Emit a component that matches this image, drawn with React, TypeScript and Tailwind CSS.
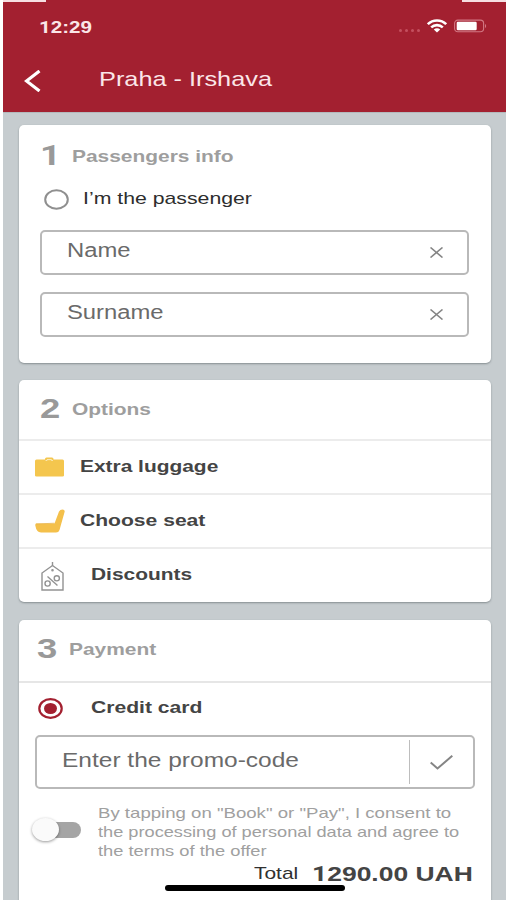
import type { ReactNode } from 'react';

type TextProps = {
  children: ReactNode;
  className?: string;
};

// Wide Helvetica-like label, stretched horizontally from its left edge
function Wide({ children, className = '' }: TextProps) {
  return (
    <span className={`block w-max origin-left whitespace-nowrap ${className}`}>
      {children}
    </span>
  );
}

// Digit one without a foot serif
function One() {
  return <span className="font-[Roboto,sans-serif]">1</span>;
}

function StatusBar() {
  return (
    <div className="flex h-[52px] items-center pl-9 pr-[19px]">
      <Wide className="mt-[2px] scale-x-[1.21] text-[17px] font-bold leading-5 text-[#fbe6e8]"><One />2:29</Wide>
      <div className="ml-auto flex items-center">
        <div className="mt-2 flex gap-[3px]">
          {[0, 1, 2, 3].map((i) => (
            <div key={i} className="h-[3px] w-[3px] rounded-full bg-[#c4505f]" />
          ))}
        </div>
        <svg className="ml-[7px] h-[14px] w-5" viewBox="0 0 20 14" fill="none" stroke="white" strokeWidth={2.6}>
          <path d="M.8 5.200C5.800.2 14.200.2 19.200 5.200" />
          <path d="M4.200 8.400c3.200-3 8.400-3 11.600 0" />
          <path d="M6.800 10.600c1.800-1.700 4.600-1.700 6.400 0L10 13.500z" fill="white" stroke="none" />
        </svg>
        <svg className="ml-[7px] h-[14px] w-[33px]" viewBox="0 0 33 14">
          <rect x=".6" y="1.1" width="29" height="11.6" rx="3.2" fill="none" stroke="#d27783" strokeWidth="1.1" />
          <rect x="2.7" y="2.700" width="20" height="8.500" rx="1.2" fill="white" />
          <path d="M31 5c1.500.5 1.500 3.500 0 4z" fill="#d27783" />
        </svg>
      </div>
    </div>
  );
}

function Header() {
  return (
    <header className="relative h-[112px] bg-[#a32030]">
      <div className="absolute left-0 top-0 h-[2px] w-[43px] bg-[#f6dfe2]" />
      <div className="absolute right-0 top-0 h-[2px] w-11 bg-[#f6dfe2]" />
      <StatusBar />
      <div className="flex h-[54px] items-center pl-[21px]">
        <svg className="mt-[3px] h-[22px] w-[17px]" viewBox="0 0 17 22" fill="none" stroke="white" strokeWidth={3.200}>
          <path d="M15.500 1L2.500 11l13 10" />
        </svg>
        <Wide className="mb-px ml-[58px] scale-x-[1.205] text-[21px] leading-6 text-[#fbe6e8]">Praha - Irshava</Wide>
      </div>
    </header>
  );
}

function Card({ children, className = '' }: TextProps) {
  return (
    <section className={`rounded-[5px] bg-white shadow-[0_1px_2px_rgba(90,100,104,0.6)] ${className}`}>
      {children}
    </section>
  );
}

function Step({ num, title, className = '' }: { num: ReactNode; title: string; className?: string }) {
  return (
    <div className={`flex h-[61px] items-center ${className}`}>
      <Wide className="mb-[2px] w-[32px]! scale-x-[1.3] text-[28px] font-bold leading-7 text-[#999999]">{num}</Wide>
      <Wide className="scale-x-[1.23] text-[17px] font-bold leading-5 text-[#9e9e9e]">{title}</Wide>
    </div>
  );
}

function Field({ label }: { label: string }) {
  return (
    <div className="flex h-[45px] items-center rounded-[5px] border-2 border-[#b9b9b9] pb-[5px] pl-[25px] pr-6">
      <Wide className="scale-x-[1.19] text-[20px] leading-6 text-[#6a6a6a]">{label}</Wide>
      <svg className="ml-auto mt-1 h-[11px] w-[13px]" viewBox="0 0 13 11" fill="none" stroke="#858585" strokeWidth={1.600}>
        <path d="M.5.5l12 10M12.500.5l-12 10" />
      </svg>
    </div>
  );
}

function SuitcaseIcon() {
  return (
    <svg className="h-5 w-[29px]" viewBox="0 0 29 20" fill="#f4c64e">
      <path d="M10 3V2Q10 .5 11.500.5h5.500q1.500 0 1.500 1.500V3h-2V2.200h-4.500V3z" />
      <path d="M1.500 2.500h26Q29 2.500 29 4v14.500q0 1-1.500 1h-26Q0 19.500 0 18.500V4Q0 2.500 1.500 2.500z" />
      <path d="M10.500 3.500h1.500V2.700h4.500v.8H18" fill="none" stroke="#fdf3d3" strokeWidth=".7" />
    </svg>
  );
}

function SeatIcon() {
  return (
    <svg className="h-6 w-[30px]" viewBox="0 0 30 24" fill="#f4c04b">
      <path d="M1.500 14.500h18L24 2.500Q25 .5 27.500.5q2.800.3 2 2.800L24.500 21q-.8 2.500-3.500 2.500H6Q1.500 23.500.3 16.500q-.3-2 1.200-2z" />
      <path d="M1 15l18.500-.8" stroke="#e5b24a" strokeWidth=".7" />
    </svg>
  );
}

function TagIcon() {
  return (
    <svg className="mt-[2px] h-[29px] w-[23px]" viewBox="0 0 23 29" fill="none" stroke="#929292" strokeWidth={1.4}>
      <path d="M1 28V11L11.500 3.500 22 11v17z" />
      <path d="M11.500 0v4" />
      <circle cx="11.500" cy="8.300" r=".6" />
      <circle cx="6.600" cy="21.500" r="2.600" />
      <circle cx="15.800" cy="16.300" r="2.600" />
      <path d="M6.500 14.500l10 9" />
    </svg>
  );
}

function PassengerCard() {
  return (
    <Card className="h-[238px] pl-[21px] pr-[22px]">
      <Step num={<One />} title="Passengers info" className="pt-[2px]" />
      <div className="flex h-[26px] items-center pl-1">
        <svg className="h-[21px] w-[25px]" viewBox="0 0 25 21" fill="none" stroke="#8f8f8f" strokeWidth={2}>
          <ellipse cx="12.500" cy="10.500" rx="11.300" ry="9.300" />
        </svg>
        <Wide className="ml-[14px] mt-[-1px] scale-x-[1.25] text-[17px] leading-5 text-[#2d2d2d]">I’m the passenger</Wide>
      </div>
      <div className="mt-[18px] flex flex-col gap-[17px]">
        <Field label="Name" />
        <Field label="Surname" />
      </div>
    </Card>
  );
}

function OptionsCard() {
  return (
    <Card className="mt-[17px] h-[222px]">
      <Step num={2} title="Options" className="h-[59px]! pl-[21px] pt-px" />
      <div className="flex h-[54px] items-center border-t-2 border-[#ececec] pl-4">
        <SuitcaseIcon />
        <Wide className="ml-[16px] scale-x-[1.23] text-[17px] font-bold leading-5 text-[#444444]">Extra luggage</Wide>
      </div>
      <div className="flex h-[54px] items-center border-t-2 border-[#ececec] pl-4">
        <SeatIcon />
        <Wide className="ml-[15px] scale-x-[1.24] text-[17px] font-bold leading-5 text-[#444444]">Choose seat</Wide>
      </div>
      <div className="flex h-[55px] items-center border-t-2 border-[#ececec] pl-[22px]">
        <TagIcon />
        <Wide className="mb-[2px] ml-[27px] scale-x-[1.23] text-[17px] font-bold leading-5 text-[#444444]">Discounts</Wide>
      </div>
    </Card>
  );
}

function PaymentCard() {
  return (
    <Card className="mt-[18px] h-[290px]">
      <Step num={3} title="Payment" className="h-[61px]! pb-[2px] pl-[18px]" />
      <div className="flex h-[54px] items-center border-t-2 border-[#e6e6e6] pl-[19px]">
        <svg className="mb-[2px] h-[21px] w-[25px]" viewBox="0 0 25 21" fill="none">
          <ellipse cx="12.500" cy="10.500" rx="11.200" ry="9.300" stroke="#a32030" strokeWidth={2.200} />
          <ellipse cx="12.500" cy="10.500" rx="6.500" ry="5.500" fill="#a32030" />
        </svg>
        <Wide className="mb-[3px] ml-[28px] scale-x-[1.24] text-[17px] font-bold leading-5 text-[#444444]">Credit card</Wide>
      </div>

      {/* Promo code */}
      <div className="ml-4 mr-4 flex h-[54px] items-center rounded-[5px] border-2 border-[#b9b9b9] pl-[25px]">
        <Wide className="mb-1 scale-x-[1.225] text-[20px] leading-6 text-[#6a6a6a]">Enter the promo-code</Wide>
        <div className="ml-auto flex h-[44px] w-16 items-center justify-center border-l border-[#bdbdbd]">
          <svg className="h-[15px] w-[23px]" viewBox="0 0 23 15" fill="none" stroke="#858585" strokeWidth={2}>
            <path d="M.7 7.500l6.800 6L22.300.8" />
          </svg>
        </div>
      </div>

      {/* Consent */}
      <div className="mt-[14px] flex">
        <div className="relative ml-[18px] mt-[19px] h-4 w-[44px] rounded-full bg-[#a5a5a5]">
          <div className="absolute -left-[5px] -top-[4px] h-[23px] w-[27px] rounded-[50%] bg-[#fafafa] shadow-[0_1px_3px_rgba(0,0,0,0.4)]" />
        </div>
        <div className="ml-[17px] text-[15px] leading-[19px] text-[#a0a0a0]">
          <Wide className="scale-x-[1.24]">By tapping on "Book" or "Pay", I consent to</Wide>
          <Wide className="scale-x-[1.213]">the processing of personal data and agree to</Wide>
          <Wide className="scale-x-[1.22]">the terms of the offer</Wide>
        </div>
      </div>
      <div className="relative flex h-[27px] items-center pl-[235px]">
        <Wide className="mt-px w-[58px]! scale-x-[1.23] text-[17px] leading-5 text-[#303030]">Total</Wide>
        <Wide className="scale-x-[1.26] text-[21px] font-bold leading-6 text-[#444444]"><One />290.00 UAH</Wide>
        <div className="absolute left-[146px] top-[25px] h-[6px] w-[180px] rounded-full bg-black" />
      </div>
    </Card>
  );
}

export default function App() {
  return (
    <div className="h-[900px] w-[507px] overflow-hidden bg-white pl-[3px] pr-px font-['Liberation_Sans',Arial,sans-serif]">
      <Header />
      <main className="h-[788px] overflow-hidden border-t border-[#b3b9bc] bg-[#c6cccf] pl-4 pr-[15px] pt-3">
        <PassengerCard />
        <OptionsCard />
        <PaymentCard />
      </main>
    </div>
  );
}
